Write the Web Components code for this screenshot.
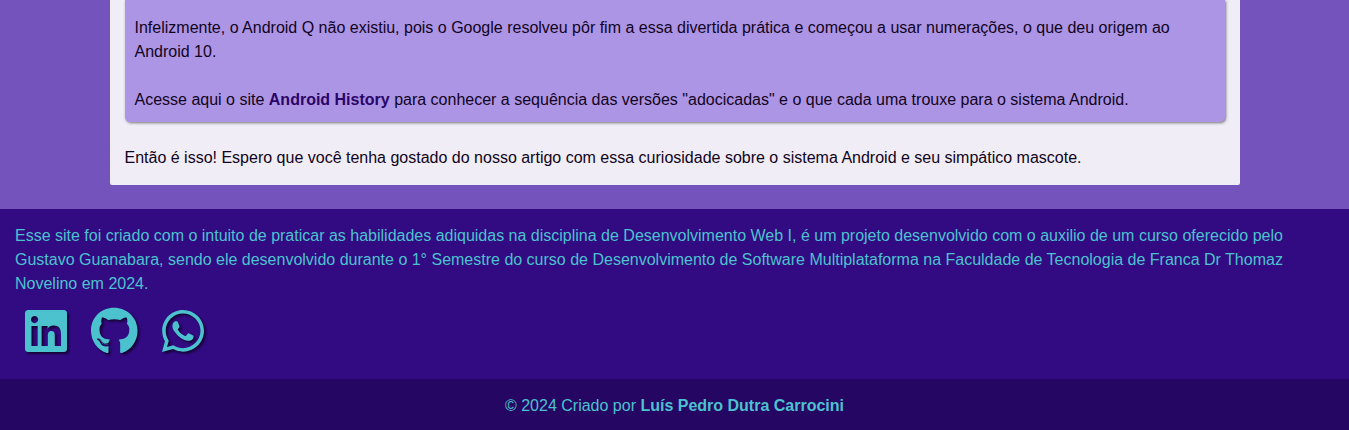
<!DOCTYPE html>
<html lang="pt-br">
<head>
<meta charset="UTF-8">
<meta name="viewport" content="width=device-width, initial-scale=1">
<title>Curiosidades do Android</title>
<style>
body { margin: 0; background: #7453bd; color: #110422; font: 16px/24px "Liberation Sans", Arial, sans-serif; }
p { margin: 0; }
info-box p + p { margin-top: 24px; }
a { color: #2a0569; font-weight: bold; text-decoration: none; }
</style>
</head>
<body>
<article-sheet>
  <info-box>
    <p>Infelizmente, o Android Q não existiu, pois o Google resolveu pôr fim a essa divertida prática e começou a usar numerações, o que deu origem ao Android 10.</p>
    <p>Acesse aqui o site <a href="#history">Android History</a> para conhecer a sequência das versões "adocicadas" e o que cada uma trouxe para o sistema Android.</p>
  </info-box>
  <p>Então é isso! Espero que você tenha gostado do nosso artigo com essa curiosidade sobre o sistema Android e seu simpático mascote.</p>
</article-sheet>
<site-footer>
  <p>Esse site foi criado com o intuito de praticar as habilidades adiquidas na disciplina de Desenvolvimento Web I, é um projeto desenvolvido com o auxilio de um curso oferecido pelo Gustavo Guanabara, sendo ele desenvolvido durante o 1° Semestre do curso de Desenvolvimento de Software Multiplataforma na Faculdade de Tecnologia de Franca Dr Thomaz Novelino em 2024.</p>
  <social-link slot="social" icon="linkedin" label="LinkedIn"></social-link>
  <social-link slot="social" icon="github" label="GitHub"></social-link>
  <social-link slot="social" icon="whatsapp" label="WhatsApp"></social-link>
</site-footer>
<copyright-bar>© 2024 Criado por <strong>Luís Pedro Dutra Carrocini</strong></copyright-bar>
<script>
const define = (name, html) => customElements.define(name, class extends HTMLElement {
  constructor() {
    super();
    this.attachShadow({ mode: "open" }).innerHTML = html;
  }
});

define("article-sheet", `
  <style>
    :host { display: block; padding-bottom: 24px; }
    main { box-sizing: border-box; max-width: 1130px; margin: 0 auto; padding: 0 15px 15px; background: #f0edf6; border-radius: 0 0 2px 2px; }
  </style>
  <main><slot></slot></main>`);

define("info-box", `
  <style>
    :host { display: block; margin-bottom: 24px; padding: 16px 10px 10px; background: #ad95e5; border-radius: 0 0 5px 5px; box-shadow: 1px 1px 3px rgba(0, 0, 0, .5); }
  </style>
  <slot></slot>`);

define("site-footer", `
  <style>
    :host { display: block; background: #320a82; color: #4cc2ce; }
    footer { padding: 15px 15px 24px; }
    nav { display: flex; gap: 24px; margin-top: 11px; padding-left: 10px; }
  </style>
  <footer>
    <slot></slot>
    <nav aria-label="Redes sociais"><slot name="social"></slot></nav>
  </footer>`);

define("copyright-bar", `
  <style>
    :host { display: block; padding: 15px 15px 12px; background: #250663; color: #4cc2ce; text-align: center; }
  </style>
  <slot></slot>`);

const icons = {
  linkedin: [448, "M416 32H31.9C14.3 32 0 46.5 0 64.3v383.4C0 465.5 14.3 480 31.9 480H416c17.6 0 32-14.5 32-32.3V64.3c0-17.8-14.4-32.3-32-32.3zM135.4 416H69V202.2h66.5V416zm-33.2-243c-21.3 0-38.5-17.3-38.5-38.5S80.9 96 102.2 96c21.2 0 38.5 17.3 38.5 38.5 0 21.3-17.2 38.5-38.5 38.5zm282.1 243h-66.4V312c0-24.8-.5-56.7-34.5-56.7-34.6 0-39.9 27-39.9 54.9V416h-66.4V202.2h63.7v29.2h.9c8.9-16.8 30.6-34.5 62.9-34.5 67.2 0 79.7 44.3 79.7 101.9V416z"],
  github: [496, "M165.9 397.4c0 2-2.3 3.6-5.2 3.6-3.3.3-5.6-1.3-5.6-3.6 0-2 2.3-3.6 5.2-3.6 3-.3 5.6 1.3 5.6 3.6zm-31.1-4.5c-.7 2 1.3 4.3 4.3 4.9 2.6 1 5.6 0 6.2-2s-1.3-4.3-4.3-5.2c-2.6-.7-5.5.3-6.2 2.3zm44.2-1.7c-2.9.7-4.9 2.6-4.6 4.9.3 2 2.9 3.3 5.9 2.6 2.9-.7 4.9-2.6 4.6-4.6-.3-1.9-3-3.2-5.9-2.9zM244.8 8C106.1 8 0 113.3 0 252c0 110.9 69.8 205.8 169.5 239.2 12.8 2.3 17.3-5.6 17.3-12.1 0-6.2-.3-40.4-.3-61.4 0 0-70 15-84.7-29.8 0 0-11.4-29.1-27.8-36.6 0 0-22.9-15.7 1.6-15.4 0 0 24.9 2 38.6 25.8 21.9 38.6 58.6 27.5 72.9 20.9 2.3-16 8.8-27.1 16-33.7-55.9-6.2-112.3-14.3-112.3-110.5 0-27.5 7.6-41.3 23.6-58.9-2.6-6.5-11.1-33.3 2.6-67.9 20.9-6.5 69 27 69 27 20-5.6 41.5-8.5 62.8-8.5s42.8 2.9 62.8 8.5c0 0 48.1-33.6 69-27 13.7 34.7 5.2 61.4 2.6 67.9 16 17.7 25.8 31.5 25.8 58.9 0 96.5-58.9 104.2-114.8 110.5 9.2 7.9 17 22.9 17 46.4 0 33.7-.3 75.4-.3 83.6 0 6.5 4.6 14.4 17.3 12.1C428.2 457.8 496 362.9 496 252 496 113.3 383.5 8 244.8 8zM97.2 352.9c-1.3 1-1 3.3.7 5.2 1.6 1.6 3.9 2.3 5.2 1 1.3-1 1-3.3-.7-5.2-1.6-1.6-3.9-2.3-5.2-1zm-10.8-8.1c-.7 1.3.3 2.9 2.3 3.9 1.6 1 3.6.7 4.3-.7.7-1.3-.3-2.9-2.3-3.9-2-.6-3.6-.3-4.3.7zm32.4 35.6c-1.6 1.3-1 4.3 1.3 6.2 2.3 2.3 5.2 2.6 6.5 1 1.3-1.3.7-4.3-1.3-6.2-2.2-2.3-5.2-2.6-6.5-1zm-11.4-14.7c-1.6 1-1.6 3.6 0 5.9 1.6 2.3 4.3 3.3 5.6 2.3 1.6-1.3 1.6-3.9 0-6.2-1.4-2.3-4-3.3-5.6-2z"],
  whatsapp: [448, "M380.9 97.1C339 55.1 283.2 32 223.9 32c-122.4 0-222 99.6-222 222 0 39.1 10.2 77.3 29.6 111L0 480l117.7-30.9c32.4 17.7 68.9 27 106.1 27h.1c122.3 0 224.1-99.6 224.1-222 0-59.3-25.2-115-67.1-157zm-157 341.6c-33.2 0-65.7-8.9-94-25.7l-6.7-4-69.8 18.3L72 359.2l-4.4-7c-18.5-29.4-28.2-63.3-28.2-98.2 0-101.7 82.8-184.5 184.6-184.5 49.3 0 95.6 19.2 130.4 54.1 34.8 34.9 56.2 81.2 56.1 130.5 0 101.8-84.9 184.6-186.6 184.6zm101.2-138.2c-5.5-2.8-32.8-16.2-37.9-18-5.1-1.9-8.8-2.8-12.5 2.8-3.7 5.6-14.3 18-17.6 21.8-3.2 3.7-6.5 4.2-12 1.4-32.6-16.3-54-29.1-75.5-66-5.7-9.8 5.7-9.1 16.3-30.3 1.8-3.7.9-6.9-.5-9.7-1.4-2.8-12.5-30.1-17.1-41.2-4.5-10.8-9.1-9.3-12.5-9.5-3.2-.2-6.9-.2-10.6-.2-3.7 0-9.7 1.4-14.8 6.9-5.1 5.6-19.4 19-19.4 46.3 0 27.3 19.9 53.7 22.6 57.4 2.8 3.7 39.1 59.7 94.8 83.8 35.2 15.2 49 16.5 66.6 13.9 10.7-1.6 32.8-13.4 37.4-26.4 4.6-13 4.6-24.1 3.2-26.4-1.3-2.5-5-3.9-10.5-6.6z"]
};

customElements.define("social-link", class extends HTMLElement {
  constructor() {
    super();
    this.attachShadow({ mode: "open" });
  }
  connectedCallback() {
    const [width, path] = icons[this.getAttribute("icon")];
    this.shadowRoot.innerHTML = `
      <style>
        :host { display: block; }
        a { display: block; color: inherit; }
        svg { display: block; height: 48px; fill: currentColor; filter: drop-shadow(2px 2px 1px rgba(0, 0, 0, .6)); overflow: visible; }
      </style>
      <a href="#${this.getAttribute("icon")}" aria-label="${this.getAttribute("label")}">
        <svg viewBox="0 0 ${width} 512" aria-hidden="true"><path d="${path}"/></svg>
      </a>`;
  }
});
</script>
</body>
</html>
